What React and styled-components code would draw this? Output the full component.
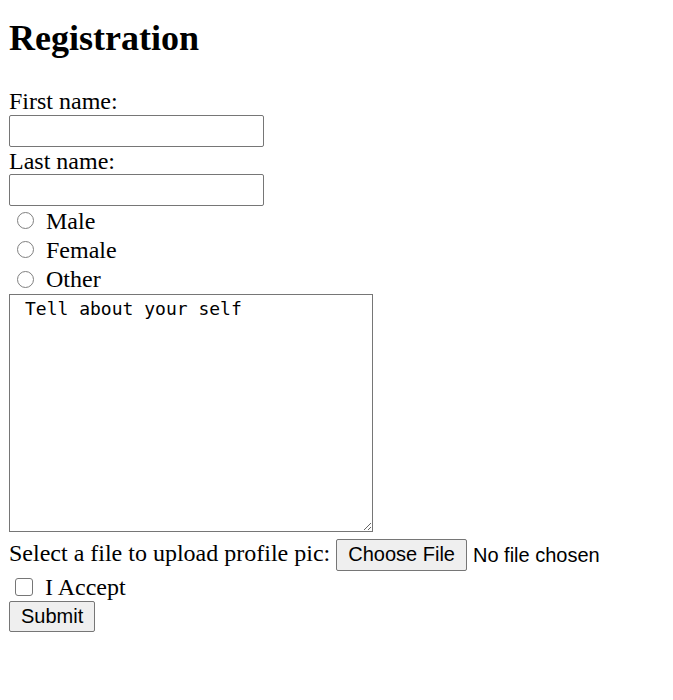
import React from "react";
import styled, { createGlobalStyle } from "styled-components";

const GlobalStyle = createGlobalStyle`
  html, body {
    margin: 0;
    padding: 0;
    background: #ffffff;
  }

  body {
    font-family: "Liberation Serif", "Times New Roman", serif;
    color: #000000;
  }
`;

const Page = styled.div`
  padding: 18px 9px 40px;
`;

const Title = styled.h1`
  margin: 0 0 28px;
  font-size: 36px;
  font-weight: 700;
  line-height: 41px;
`;

const Form = styled.form`
  display: flex;
  flex-direction: column;
  align-items: flex-start;
  font-size: 24px;
`;

const FieldLabel = styled.label`
  display: block;
  line-height: 28px;
  height: ${(props) => props.$h || 28}px;
`;

const TextInput = styled.input`
  box-sizing: border-box;
  width: 255px;
  height: 32px;
  margin: 0;
  padding: 2px 4px;
  border: 1px solid #767676;
  border-radius: 2px;
  font-family: "Liberation Sans", Arial, sans-serif;
  font-size: 20px;
  background: #ffffff;
`;

const RadioGroup = styled.div`
  display: flex;
  flex-direction: column;
`;

const RadioRow = styled.label`
  display: flex;
  align-items: center;
  height: 29.33px;
  line-height: 28px;
`;

const Radio = styled.input.attrs({ type: "radio" })`
  appearance: none;
  box-sizing: border-box;
  width: 17px;
  height: 17px;
  margin: 0 12px 0 8px;
  border: 1px solid #808080;
  border-radius: 50%;
  background: #ffffff;
`;

const AboutBox = styled.textarea`
  box-sizing: border-box;
  width: 364px;
  height: 238px;
  margin: 0;
  padding: 3px 4px 3px 15px;
  border: 1px solid #767676;
  border-radius: 0;
  font-family: "DejaVu Sans Mono", "Liberation Mono", monospace;
  font-size: 18px;
  line-height: 21px;
  color: #000000;
  background: #ffffff;
`;

const FileRow = styled.div`
  display: flex;
  align-items: baseline;
  gap: 6px;
  margin-top: 7px;
  height: 35px;
  white-space: nowrap;
`;

const FileText = styled.span`
  flex-shrink: 0;
  line-height: 28px;
`;

const FileInput = styled.input.attrs({ type: "file" })`
  flex-shrink: 0;
  width: 270px;
  font-family: "Liberation Sans", Arial, sans-serif;
  font-size: 20px;
  color: #000000;

  &::file-selector-button {
    box-sizing: border-box;
    height: 32px;
    margin: 0 6px 0 0;
    padding: 3px 11px;
    border: 1px solid #767676;
    border-radius: 2px;
    background: #efefef;
    font-family: "Liberation Sans", Arial, sans-serif;
    font-size: 20px;
    color: #000000;
  }
`;

const CheckRow = styled.label`
  display: flex;
  align-items: center;
  height: 27px;
  line-height: 27px;
`;

const Checkbox = styled.input.attrs({ type: "checkbox" })`
  appearance: none;
  box-sizing: border-box;
  width: 18px;
  height: 18px;
  margin: 0 12px 0 6px;
  border: 1px solid #767676;
  border-radius: 3px;
  background: #ffffff;
`;

const SubmitButton = styled.button`
  box-sizing: border-box;
  height: 31px;
  margin: 0;
  padding: 2px 11px;
  border: 1px solid #767676;
  border-radius: 2px;
  background: #efefef;
  font-family: "Liberation Sans", Arial, sans-serif;
  font-size: 20px;
  color: #000000;
`;

const genders = ["Male", "Female", "Other"];

export default function App() {
  return (
    <Page>
      <GlobalStyle />
      <Title>Registration</Title>
      <Form onSubmit={(e) => e.preventDefault()}>
        <FieldLabel htmlFor="first">First name:</FieldLabel>
        <TextInput id="first" type="text" />
        <FieldLabel htmlFor="last" $h={27}>
          Last name:
        </FieldLabel>
        <TextInput id="last" type="text" />
        <RadioGroup>
          {genders.map((g) => (
            <RadioRow key={g}>
              <Radio name="gender" value={g.toLowerCase()} />
              {g}
            </RadioRow>
          ))}
        </RadioGroup>
        <AboutBox defaultValue="Tell about your self" />
        <FileRow>
          <FileText>Select a file to upload profile pic:</FileText>
          <FileInput />
        </FileRow>
        <CheckRow>
          <Checkbox />I Accept
        </CheckRow>
        <SubmitButton type="submit">Submit</SubmitButton>
      </Form>
    </Page>
  );
}
